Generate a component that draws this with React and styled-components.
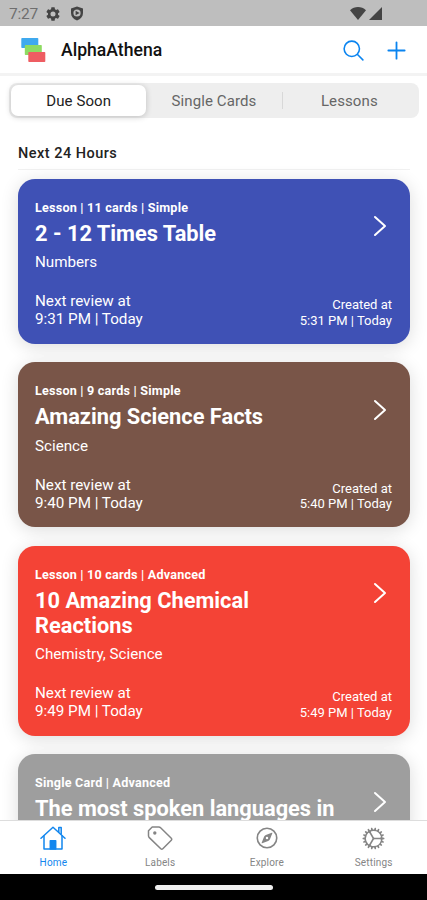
import React from 'react';
import styled, { createGlobalStyle } from 'styled-components';
import {
    IoSearchOutline,
    IoAddOutline,
    IoCompassOutline,
    IoCogOutline
} from 'react-icons/io5';

const GlobalStyle = createGlobalStyle`
    * {
        box-sizing: border-box;
    }
    body {
        margin: 0;
        background-color: #fff;
        font-family: Roboto, sans-serif;
    }
`;

const Screen = styled.div`
    display: flex;
    flex-direction: column;
    width: 427px;
    height: 900px;
    overflow: hidden;
    background-color: #fff;
`;

const StatusBar = styled.div`
    display: flex;
    flex: none;
    align-items: center;
    justify-content: space-between;
    height: 26px;
    padding: 1px 45px 0 9px;
    background-color: #bebebe;
    color: #444;
`;
const StatusGroup = styled.div`
    display: flex;
    align-items: center;
    gap: ${props => props.$gap};
`;
const Clock = styled.span`
    width: 28px;
    margin-right: -1px;
    font-size: 15.5px;
    line-height: 24px;
    letter-spacing: -0.2px;
    color: #6e6e6e;
`;

const Header = styled.header`
    display: flex;
    flex: none;
    align-items: center;
    height: 50px;
    padding: 0 20px;
    border-bottom: 3px solid #f3f3f3;
`;
const Brand = styled.h1`
    flex: 1;
    margin: 1px 0 0 15px;
    font-size: 17.6px;
    font-weight: 500;
    color: #111;
`;
const HeaderActions = styled.div`
    display: flex;
    align-items: center;
    gap: 16px;
    margin: 1px -4px 0 0;
    color: #0a84f0;
`;

const Segments = styled.div`
    display: flex;
    flex: none;
    align-items: center;
    height: 35px;
    margin: 7px 8px 0 9px;
    padding: 2px;
    border-radius: 8px;
    background-color: #eee;
`;
const Segment = styled.div`
    flex: 1;
    height: 31px;
    border-radius: 7px;
    font-size: 15px;
    line-height: 32px;
    letter-spacing: 0.1px;
    text-align: center;
    color: ${props => props.$active ? '#222' : '#666'};
    background-color: ${props => props.$active ? '#fff' : 'transparent'};
    box-shadow: ${props => props.$active ? '0 1px 6px rgba(0, 0, 0, 0.2)' : 'none'};
`;
const Divider = styled.div`
    width: 1px;
    height: 17px;
    margin-right: -1px;
    background-color: #d8d8d8;
`;

const Content = styled.main`
    flex: 1;
    min-height: 0;
    padding: 26px 17px 0 18px;
    overflow: hidden;
`;
const SectionTitle = styled.h2`
    height: 26px;
    margin: 0 0 8.5px;
    border-bottom: 1px solid #f1f1f1;
    font-size: 14.5px;
    font-weight: 500;
    line-height: 19px;
    letter-spacing: 0.48px;
    color: #222;
`;

const CardBox = styled.article`
    margin-bottom: 18.5px;
    padding: 21px 18px 15.5px 17px;
    border-radius: 17px;
    background-color: ${props => props.$color};
    box-shadow: 0 3px 18px rgba(0, 0, 0, 0.14);
    color: #fff;
`;
const CardTop = styled.div`
    display: flex;
    justify-content: space-between;
`;
const CardInfo = styled.div`
    width: 310px;
`;
const Tag = styled.div`
    font-size: 12.6px;
    font-weight: 700;
    line-height: 16px;
    letter-spacing: 0.21px;
`;
const CardTitle = styled.h3`
    margin: 5px 0 6.5px;
    font-size: 21.8px;
    font-weight: 700;
    line-height: 25px;
`;
const Labels = styled.div`
    font-size: 15.2px;
    line-height: 20px;
`;
const Chevron = styled.svg`
    flex: none;
    width: 14px;
    height: 22px;
    margin: 15.5px 5.5px 0 0;
`;
const CardBottom = styled.div`
    display: flex;
    align-items: flex-end;
    justify-content: space-between;
    margin-top: 20px;
`;
const Review = styled.div`
    font-size: 15.2px;
    line-height: 18px;
`;
const Created = styled.div`
    font-size: 13px;
    line-height: 15.5px;
    text-align: right;
`;

const TabBar = styled.nav`
    display: flex;
    flex: none;
    height: 54px;
    border-top: 1px solid #ddd;
    background-color: #fff;
`;
const Tab = styled.div`
    display: flex;
    flex: 1;
    flex-direction: column;
    align-items: center;
    padding-top: 4px;
    font-size: 10px;
    line-height: 14px;
    letter-spacing: 0.15px;
    color: ${props => props.$active ? '#1286ee' : '#858585'};
`;
const TabIcon = styled.span`
    display: flex;
    align-items: center;
    justify-content: center;
    height: 26px;
    margin-bottom: 5px;
`;

const GestureBar = styled.div`
    display: flex;
    flex: none;
    justify-content: center;
    height: 26px;
    padding-top: 11px;
    background-color: #000;
`;
const Pill = styled.div`
    width: 118px;
    height: 5px;
    border-radius: 3px;
    background-color: #eee;
`;

const GearIcon = () => (
    <svg width="14" height="14" viewBox="2 2 20 20" fill="#444">
        <path d="M19.14 12.94c.04-.3.06-.61.06-.94s-.02-.64-.07-.94l2.03-1.58a.49.49 0 0 0 .12-.61l-1.92-3.32a.49.49 0 0 0-.59-.22l-2.39.96a7 7 0 0 0-1.62-.94l-.36-2.54a.48.48 0 0 0-.48-.41h-3.84a.48.48 0 0 0-.47.41l-.36 2.54a7 7 0 0 0-1.62.94l-2.39-.96a.48.48 0 0 0-.59.22L2.74 8.87a.47.47 0 0 0 .12.61l2.03 1.58a7 7 0 0 0 0 1.88l-2.03 1.58a.49.49 0 0 0-.12.61l1.92 3.32c.12.22.37.29.59.22l2.39-.96c.5.38 1.03.7 1.62.94l.36 2.54c.05.24.24.41.48.41h3.84c.24 0 .44-.17.47-.41l.36-2.54a7 7 0 0 0 1.62-.94l2.39.96c.22.08.47 0 .59-.22l1.92-3.32a.47.47 0 0 0-.12-.61zM12 15.6a3.6 3.6 0 1 1 0-7.2 3.6 3.6 0 0 1 0 7.2z" />
    </svg>
);

const ShieldIcon = () => (
    <svg width="14" height="15" viewBox="0 0 14 15">
        <path d="M7 .5 13 2.4V7c0 3.5-2.3 6-6 7.5C3.3 13 1 10.5 1 7V2.4z" fill="#444" />
        <circle cx="7" cy="7" r="3.6" fill="#bebebe" />
        <path d="M5.6 4.8 9.6 7 5.6 9.2z" fill="#444" />
    </svg>
);

const WifiIcon = () => (
    <svg width="16" height="13" viewBox="0 0 16 13">
        <path d="M0 3.2C4.5-1 11.5-1 16 3.2L8 13z" fill="#444" />
    </svg>
);

const SignalIcon = () => (
    <svg width="13" height="13" viewBox="0 0 13 13">
        <path d="M13 0v13H0z" fill="#444" />
    </svg>
);

const Logo = () => (
    <svg width="26" height="26" viewBox="0 0 26 26">
        <rect x="1.3" y="1" width="17" height="10" rx="0.8" fill="#3fa9ee" />
        <rect x="4.8" y="8" width="17" height="10" rx="0.8" fill="#8edb62" />
        <rect x="8.3" y="15" width="17" height="10" rx="0.8" fill="#ee5d62" />
    </svg>
);

const HomeIcon = () => (
    <svg width="26" height="26" viewBox="0 0 26 26" fill="none" stroke="currentColor" strokeWidth="1.5" strokeLinecap="round" strokeLinejoin="round">
        <path d="M1 13.2 13 2.2 25 13.2" />
        <path d="M4 11V24H22V11" />
        <path d="M18.8 7V2.5h2.4V9" />
        <path d="M10.3 24V15.8h5.4V24z" fill="currentColor" />
    </svg>
);

const TagIcon = () => (
    <svg width="26" height="26" viewBox="0 0 26 26" fill="none" stroke="currentColor" strokeWidth="1.5" strokeLinejoin="round">
        <path d="M5.2 2h6.6c.7 0 1.300.2 1.800.7L24.300 13.200c.6.6.6 1.400 0 2L15.800 23.700c-.6.6-1.400.6-2 0L2.300 12.600c-.5-.5-.8-1.100-.8-1.800V5.700z" />
        <circle cx="7.8" cy="8" r="1.7" fill="currentColor" stroke="none" />
    </svg>
);

const cards = [
    {
        color: '#3f51b5',
        tag: 'Lesson | 11 cards | Simple',
        title: '2 - 12 Times Table',
        labels: 'Numbers',
        review: '9:31 PM | Today',
        created: '5:31 PM | Today'
    },
    {
        color: '#795548',
        tag: 'Lesson | 9 cards | Simple',
        title: 'Amazing Science Facts',
        labels: 'Science',
        review: '9:40 PM | Today',
        created: '5:40 PM | Today'
    },
    {
        color: '#f44336',
        tag: 'Lesson | 10 cards | Advanced',
        title: '10 Amazing Chemical Reactions',
        labels: 'Chemistry, Science',
        review: '9:49 PM | Today',
        created: '5:49 PM | Today'
    },
    {
        color: '#9e9e9e',
        tag: 'Single Card | Advanced',
        title: 'The most spoken languages in'
    }
];

const Card = ({ card }) => {
    const { color, tag, title, labels, review, created } = card;
    return (
        <CardBox $color={color}>
            <CardTop>
                <CardInfo>
                    <Tag>{tag}</Tag>
                    <CardTitle>{title}</CardTitle>
                    <Labels>{labels}</Labels>
                </CardInfo>
                <Chevron viewBox="0 0 14 22" fill="none" stroke="#fff" strokeWidth="2" strokeLinecap="round" strokeLinejoin="round">
                    <path d="M2 2 12 11 2 20" />
                </Chevron>
            </CardTop>
            {review ? (
                <CardBottom>
                    <Review>Next review at<br />{review}</Review>
                    <Created>Created at<br />{created}</Created>
                </CardBottom>
            ) : null}
        </CardBox>
    )
}

export default function App() {
    return (
        <>
            <GlobalStyle />
            <Screen>
                <StatusBar>
                    <StatusGroup $gap="10px">
                        <Clock>7:27</Clock>
                        <GearIcon />
                        <ShieldIcon />
                    </StatusGroup>
                    <StatusGroup $gap="3px">
                        <WifiIcon />
                        <SignalIcon />
                    </StatusGroup>
                </StatusBar>
                <Header>
                    <Logo />
                    <Brand>AlphaAthena</Brand>
                    <HeaderActions>
                        <IoSearchOutline size={25} />
                        <IoAddOutline size={29} />
                    </HeaderActions>
                </Header>
                <Segments>
                    <Segment $active>Due Soon</Segment>
                    <Segment>Single Cards</Segment>
                    <Divider />
                    <Segment>Lessons</Segment>
                </Segments>
                <Content>
                    <SectionTitle>Next 24 Hours</SectionTitle>
                    {cards.map(card => <Card key={card.title} card={card} />)}
                </Content>
                <TabBar>
                    <Tab $active><TabIcon><HomeIcon /></TabIcon>Home</Tab>
                    <Tab><TabIcon><TagIcon /></TabIcon>Labels</Tab>
                    <Tab><TabIcon><IoCompassOutline size={26} /></TabIcon>Explore</Tab>
                    <Tab><TabIcon><IoCogOutline size={27} /></TabIcon>Settings</Tab>
                </TabBar>
                <GestureBar>
                    <Pill />
                </GestureBar>
            </Screen>
        </>
    );
}
